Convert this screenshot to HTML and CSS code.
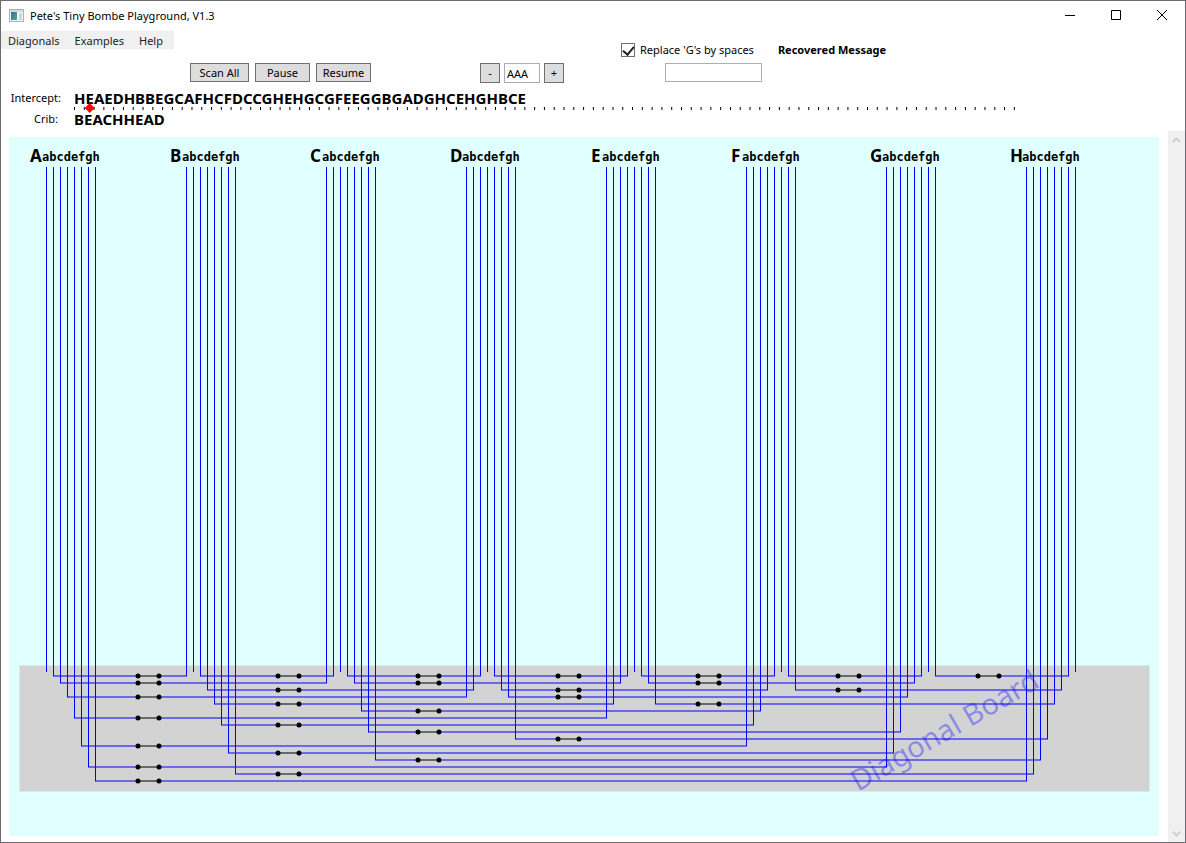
FILE: index.html
```html
<!DOCTYPE html>
<html lang="en">
<head>
<meta charset="utf-8">
<title>Pete's Tiny Bombe Playground, V1.3</title>
<link rel="stylesheet" href="styles.css">
</head>
<body>
<div class="window">
  <header class="titlebar">
    <svg class="app-icon" width="16" height="14" viewBox="0 0 16 14" aria-hidden="true">
      <defs><linearGradient id="pane" x1="0" y1="0" x2="1" y2="1"><stop offset="0" stop-color="#3a6ea0"/><stop offset="1" stop-color="#4fa98a"/></linearGradient></defs>
      <rect x="0.5" y="0.5" width="14" height="12" fill="#f4f6f8" stroke="#a9b1b8"/>
      <rect x="1" y="1" width="13" height="2" fill="#d5dade"/>
      <rect x="2" y="3" width="6" height="8" fill="url(#pane)"/>
      <rect x="10" y="4" width="3" height="7" fill="#cfd4d9"/>
    </svg>
    <h1 class="title">Pete's Tiny Bombe Playground, V1.3</h1>
    <div class="window-buttons">
      <button class="window-button" aria-label="Minimize"><svg width="12" height="12" viewBox="0 0 12 12"><path d="M1 5.500H11"/></svg></button>
      <button class="window-button" aria-label="Maximize"><svg width="12" height="12" viewBox="0 0 12 12"><path d="M1.500 0.500H10.500V9.500H1.500Z"/></svg></button>
      <button class="window-button" aria-label="Close"><svg width="12" height="12" viewBox="0 0 12 12"><path d="M1 0L11 10M11 0L1 10"/></svg></button>
    </div>
  </header>

  <div class="controls">
    <div class="controls-main">
      <nav class="menu">
        <button class="menu-item">Diagonals</button>
        <button class="menu-item">Examples</button>
        <button class="menu-item">Help</button>
      </nav>
      <div class="actions">
        <button class="button wide">Scan All</button>
        <button class="button">Pause</button>
        <button class="button">Resume</button>
        <div class="stepper">
          <button class="step">-</button>
          <input class="field position" type="text" value="AAA" aria-label="Rotor position">
          <button class="step">+</button>
        </div>
      </div>
    </div>
    <div class="output">
      <div class="output-head">
        <input class="check" type="checkbox" id="spaces" checked>
        <label for="spaces">Replace 'G's by spaces</label>
        <label class="recovered" for="message">Recovered Message</label>
      </div>
      <input class="field message" type="text" id="message">
    </div>
  </div>

  <div class="cipher">
    <span class="cipher-label">Intercept:</span>
    <span class="cipher-text">HEAEDHBBEGCAFHCFDCCGHEHGCGFEEGGBGADGHCEHGHBCE</span>
    <div class="slider">
      <svg class="ticks" viewBox="0 0 942 3" aria-hidden="true"><path d="M0 1.500H942" stroke="#000" stroke-width="3" stroke-dasharray="1 8.790"/></svg>
      <input class="slider-input" type="range" min="0" max="96" step="any" value="1.5" aria-label="Crib offset">
    </div>
    <span class="cipher-label crib">Crib:</span>
    <span class="cipher-text">BEACHHEAD</span>
  </div>

  <div class="viewport">
    <main class="scene">
      <svg class="diagram" viewBox="9 137 1150 699" role="img" aria-label="Wiring between buses A to H and the diagonal board">
        <rect class="board" x="19.500" y="665.500" width="1130" height="126"/>
        <g class="bus-name">
          <text x="30" y="162">A</text><text x="170" y="162">B</text><text x="310" y="162">C</text><text x="450" y="162">D</text>
          <text x="591" y="162">E</text><text x="731" y="162">F</text><text x="870" y="162">G</text><text x="1010" y="162">H</text>
        </g>
        <g class="wire-names">
          <text x="42" y="161">abcdefgh</text><text x="182" y="161">abcdefgh</text><text x="322" y="161">abcdefgh</text><text x="462" y="161">abcdefgh</text>
          <text x="602" y="161">abcdefgh</text><text x="742" y="161">abcdefgh</text><text x="882" y="161">abcdefgh</text><text x="1022" y="161">abcdefgh</text>
        </g>
        <text class="board-name" transform="translate(858 792) rotate(-30)" x="0" y="0">Diagonal Board</text>
        <g class="level">
          <path d="M53 676H138M159 676H187M60 683H138M159 683H327M67 697H138M159 697H467M74 718H138M159 718H607M81 746H138M159 746H747M88 767H138M159 767H887M95 781H138M159 781H1027"/>
          <path d="M200 676H278M299 676H334M207 690H278M299 690H474M214 704H278M299 704H614M221 725H278M299 725H754M228 753H278M299 753H894M235 774H278M299 774H1034"/>
          <path d="M347 676H418M439 676H481M354 683H418M439 683H621M361 711H418M439 711H761M368 732H418M439 732H901M375 760H418M439 760H1041"/>
          <path d="M494 676H558M579 676H628M501 690H558M579 690H768M508 697H558M579 697H908M515 739H558M579 739H1048"/>
          <path d="M641 676H698M719 676H775M648 683H698M719 683H915M655 704H698M719 704H1055"/>
          <path d="M788 676H838M859 676H922M795 690H838M859 690H1062"/>
          <path d="M935 676H978M999 676H1069"/>
        </g>
        <g class="wire">
          <path d="M46.500 167V672M53.500 167V676M60.500 167V683M67.500 167V697M74.500 167V718M81.500 167V746M88.500 167V767M95.500 167V781"/>
          <path d="M186.500 167V676M193.500 167V672M200.500 167V676M207.500 167V690M214.500 167V704M221.500 167V725M228.500 167V753M235.500 167V774"/>
          <path d="M326.500 167V683M333.500 167V676M340.500 167V672M347.500 167V676M354.500 167V683M361.500 167V711M368.500 167V732M375.500 167V760"/>
          <path d="M466.500 167V697M473.500 167V690M480.500 167V676M487.500 167V672M494.500 167V676M501.500 167V690M508.500 167V697M515.500 167V739"/>
          <path d="M606.500 167V718M613.500 167V704M620.500 167V683M627.500 167V676M634.500 167V672M641.500 167V676M648.500 167V683M655.500 167V704"/>
          <path d="M746.500 167V746M753.500 167V725M760.500 167V711M767.500 167V690M774.500 167V676M781.500 167V672M788.500 167V676M795.500 167V690"/>
          <path d="M886.500 167V767M893.500 167V753M900.500 167V732M907.500 167V697M914.500 167V683M921.500 167V676M928.500 167V672M935.500 167V676"/>
          <path d="M1026.500 167V781M1033.500 167V774M1040.500 167V760M1047.500 167V739M1054.500 167V704M1061.500 167V690M1068.500 167V676M1075.500 167V672"/>
        </g>
        <path class="link" d="M138 676h21M138 683h21M138 697h21M138 718h21M138 746h21M138 767h21M138 781h21M278 676h21M278 690h21M278 704h21M278 725h21M278 753h21M278 774h21M418 676h21M418 683h21M418 711h21M418 732h21M418 760h21M558 676h21M558 690h21M558 697h21M558 739h21M698 676h21M698 683h21M698 704h21M838 676h21M838 690h21M978 676h21"/>
        <path class="dots" d="M138 676h0m21 0h0M138 683h0m21 0h0M138 697h0m21 0h0M138 718h0m21 0h0M138 746h0m21 0h0M138 767h0m21 0h0M138 781h0m21 0h0M278 676h0m21 0h0M278 690h0m21 0h0M278 704h0m21 0h0M278 725h0m21 0h0M278 753h0m21 0h0M278 774h0m21 0h0M418 676h0m21 0h0M418 683h0m21 0h0M418 711h0m21 0h0M418 732h0m21 0h0M418 760h0m21 0h0M558 676h0m21 0h0M558 690h0m21 0h0M558 697h0m21 0h0M558 739h0m21 0h0M698 676h0m21 0h0M698 683h0m21 0h0M698 704h0m21 0h0M838 676h0m21 0h0M838 690h0m21 0h0M978 676h0m21 0h0"/>
      </svg>
    </main>
    <div class="scrollbar">
      <button class="scroll-button" disabled aria-label="Scroll up"><svg width="9" height="6" viewBox="0 0 9 6"><path d="M1 5L4.500 1.500L8 5"/></svg></button>
      <button class="scroll-button" disabled aria-label="Scroll down"><svg width="9" height="6" viewBox="0 0 9 6"><path d="M1 1L4.500 4.500L8 1"/></svg></button>
    </div>
  </div>
</div>
</body>
</html>
```

FILE: styles.css
```css
* { box-sizing: border-box; }

body {
  margin: 0;
  background: #fff;
  color: #000;
  font: 11px/16px "Noto Sans", "Open Sans", sans-serif;
}

button, input { margin: 0; font: inherit; color: inherit; }
button { padding: 0; border: 0; background: none; }

.window {
  display: flex;
  flex-direction: column;
  min-height: 100vh;
  border: 1px solid #6b6b70;
}

.titlebar { display: flex; align-items: center; height: 30px; padding-left: 8px; }
.app-icon { margin-right: 5px; }
.title { margin: 0; font-size: 11px; font-weight: 400; }
.window-buttons { display: flex; margin-left: auto; }
.window-button { display: grid; place-items: center; width: 46px; height: 30px; }
.window-button svg { fill: none; stroke: #000; }

.controls { display: flex; }
.menu { display: flex; width: 173px; height: 18px; padding-left: 7px; gap: 15px; background: #f0f0f0; }
.menu-item { line-height: 20px; color: #222; }
.actions { display: flex; gap: 6px; margin: 14px 0 0 189px; }
.button { width: 55px; height: 19px; border: 1px solid #707070; background: #ddd; line-height: 17px; }
.wide { width: 59px; }
.stepper { display: flex; gap: 4px; margin-left: 103px; }
.step { width: 20px; height: 20px; border: 1px solid #707070; background: #ddd; line-height: 18px; }
.field { border: 1px solid #abadb3; border-radius: 0; background: #fff; }
.position { width: 36px; height: 20px; padding: 0 2px; }

.output { margin-left: 57px; padding-top: 11px; }
.output-head { display: flex; align-items: center; height: 16px; }
.check {
  appearance: none;
  width: 14px;
  height: 14px;
  margin-right: 5px;
  border: 1px solid #707070;
  background: #fff;
}
.check:checked::after {
  content: "";
  display: block;
  width: 5px;
  height: 9px;
  margin: 0 auto;
  border: solid #212121;
  border-width: 0 2px 2px 0;
  transform: rotate(40deg);
}
.recovered { margin-left: 24px; font-weight: 700; }
.message { display: block; width: 97px; height: 19px; margin: 5px 0 0 44px; }

.cipher {
  display: grid;
  grid-template-columns: 60px 1fr;
  grid-template-rows: 17px 4px 16px;
  column-gap: 13px;
  margin-top: 7px;
}
.cipher-label { text-align: right; }
.crib { padding-right: 3px; }
.cipher-text { font-weight: 700; font-size: 15px; }
.slider { position: relative; grid-column: 2; max-width: 942px; }
.ticks { display: block; width: 100%; }
.slider-input {
  position: absolute;
  z-index: 1;
  left: -4px;
  right: -4px;
  top: -4px;
  width: calc(100% + 8px);
  height: 10px;
  appearance: none;
  background: none;
}
.slider-input::-webkit-slider-thumb {
  appearance: none;
  width: 10px;
  height: 10px;
  background: #f00;
  clip-path: polygon(50% 0, 100% 50%, 50% 100%, 0 50%);
}

.viewport { display: flex; flex: 1; margin-top: 4px; }
.scene { flex: 1; margin: 6px 9px 6px 8px; background: #e0ffff; }
.diagram { display: block; width: 100%; }
.board { fill: #d3d3d3; }
.bus-name { font: 700 17px "Noto Sans", sans-serif; }
.wire-names { font: 700 12px "DejaVu Sans Mono", monospace; }
.board-name { font: 29px "Noto Sans", sans-serif; fill: #0000ff; fill-opacity: 0.35; }
.level, .wire { fill: none; stroke: #0000ff; }
.link { fill: none; stroke: #000; }
.dots { fill: none; stroke: #000; stroke-width: 5; stroke-linecap: round; }

.scrollbar { display: flex; flex-direction: column; justify-content: space-between; width: 17px; background: #f0f0f0; }
.scroll-button { display: grid; place-items: center; height: 17px; }
.scroll-button svg { fill: none; stroke: #d0d0d0; stroke-width: 2; }
```
